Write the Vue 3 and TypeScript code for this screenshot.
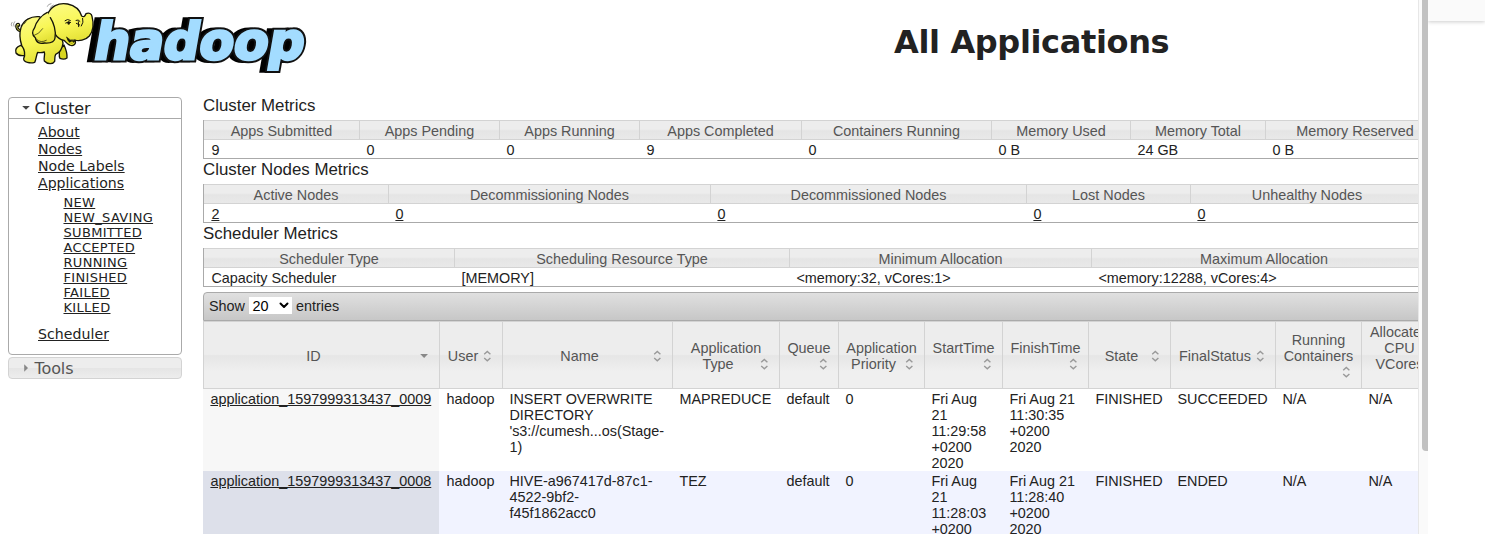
<script setup lang="ts">
interface Metric {
  label: string
  value: string
  link?: boolean
}
interface MetricTable {
  title: string
  kind: string
  cells: Metric[]
}

const metricTables: MetricTable[] = [
  {
    title: 'Cluster Metrics',
    kind: 'cols-cluster',
    cells: [
      { label: 'Apps Submitted', value: '9' },
      { label: 'Apps Pending', value: '0' },
      { label: 'Apps Running', value: '0' },
      { label: 'Apps Completed', value: '9' },
      { label: 'Containers Running', value: '0' },
      { label: 'Memory Used', value: '0 B' },
      { label: 'Memory Total', value: '24 GB' },
      { label: 'Memory Reserved', value: '0 B' },
    ],
  },
  {
    title: 'Cluster Nodes Metrics',
    kind: 'cols-nodes',
    cells: [
      { label: 'Active Nodes', value: '2', link: true },
      { label: 'Decommissioning Nodes', value: '0', link: true },
      { label: 'Decommissioned Nodes', value: '0', link: true },
      { label: 'Lost Nodes', value: '0', link: true },
      { label: 'Unhealthy Nodes', value: '0', link: true },
    ],
  },
  {
    title: 'Scheduler Metrics',
    kind: 'cols-scheduler',
    cells: [
      { label: 'Scheduler Type', value: 'Capacity Scheduler' },
      { label: 'Scheduling Resource Type', value: '[MEMORY]' },
      { label: 'Minimum Allocation', value: '<memory:32, vCores:1>' },
      { label: 'Maximum Allocation', value: '<memory:12288, vCores:4>' },
    ],
  },
]

const mainLinks: string[] = ['About', 'Nodes', 'Node Labels', 'Applications']
const stateLinks: string[] = ['NEW', 'NEW_SAVING', 'SUBMITTED', 'ACCEPTED', 'RUNNING', 'FINISHED', 'FAILED', 'KILLED']

const headers: string[] = [
  'ID', 'User', 'Name', 'Application\nType', 'Queue', 'Application\nPriority', 'StartTime',
  'FinishTime', 'State', 'FinalStatus', 'Running\nContainers', 'Allocated\nCPU\nVCores',
]

const rows: string[][] = [
  ['application_1597999313437_0009', 'hadoop', "INSERT OVERWRITE\nDIRECTORY\n's3://cumesh...os(Stage-\n1)", 'MAPREDUCE', 'default', '0',
    'Fri Aug\n21\n11:29:58\n+0200\n2020', 'Fri Aug 21\n11:30:35\n+0200\n2020', 'FINISHED', 'SUCCEEDED', 'N/A', 'N/A'],
  ['application_1597999313437_0008', 'hadoop', 'HIVE-a967417d-87c1-\n4522-9bf2-\nf45f1862acc0', 'TEZ', 'default', '0',
    'Fri Aug\n21\n11:28:03\n+0200\n2020', 'Fri Aug 21\n11:28:40\n+0200\n2020', 'FINISHED', 'ENDED', 'N/A', 'N/A'],
]
</script>

<template>
  <div class="screen">
    <div class="page">
      <header class="top">
        <svg class="logo" viewBox="0 0 960 240" width="320" height="80">
          <defs>
            <linearGradient id="skin" x1="0" y1="0" x2="0.3" y2="1">
              <stop offset="0" stop-color="#fcfb86" />
              <stop offset="0.6" stop-color="#f8f655" />
              <stop offset="1" stop-color="#e4e136" />
            </linearGradient>
          </defs>
          <g class="word" font-family="DejaVu Sans, sans-serif" font-weight="bold" font-size="152" transform="translate(0 176) skewX(-10)">
            <text class="shade" x="259" y="0" textLength="630" lengthAdjust="spacingAndGlyphs">hadoop</text>
            <text class="edge" x="276" y="0" textLength="630" lengthAdjust="spacingAndGlyphs" aria-hidden="true">hadoop</text>
            <text class="face" x="276" y="0" textLength="630" lengthAdjust="spacingAndGlyphs" aria-hidden="true">hadoop</text>
          </g>
          <g class="elephant" fill="url(#skin)" stroke="#15150a" stroke-width="4" stroke-linejoin="round" stroke-linecap="round">
            <path d="M62 95 C52 94 45 84 48 75 C51 68 59 69 59 76 C58 80 54 79 54 77 C52 86 58 90 64 88Z" />
            <path d="M178 148 C180 158 175 168 180 175 Q192 180 201 174 C202 160 198 148 192 135Z" fill="#d8d520" />
            <path d="M62 136 C50 140 45 149 48 159 C54 167 64 168 75 166 L82 145Z" />
            <path d="M117 50 C92 48 70 61 63 83 C57 103 60 121 65 136 C74 149 78 160 71 176 C70 187 91 191 104 187 C109 178 108 167 113 157 Q124 159 133 156 C136 164 130 176 133 183 C143 194 159 193 164 184 C165 177 163 170 167 163 C181 157 187 145 189 130 L180 80Z" />
            <path d="M141 47 C151 18 176 7 203 12 C226 17 240 31 245 48 C253 54 256 45 258 41 C267 37 275 41 276 49 C282 72 279 94 268 108 C257 121 235 124 225 120 C230 133 219 140 209 135 C202 133 198 126 192 121 C181 119 170 110 164 100Z" />
            <path d="M142 37 C124 45 108 66 104 83 C96 94 95 105 106 113 C109 129 119 132 134 129 C151 130 164 125 165 114 C169 94 161 68 151 53" />
            <path d="M200 112 Q210 124 225 120 Q226 127 214 130 Q203 126 200 112" fill="#171709" stroke-width="2" />
            <path d="M210 127 Q215 123 221 126 Q218 132 212 131Z" fill="#d8d520" stroke="none" />
            <path d="M195 62 Q202 55 211 61 M197 69 Q205 64 212 67 M228 61 Q235 57 240 64 M229 70 L239 75 M235 65 L236 80 M248 55 Q252 67 244 78" fill="none" stroke-width="3" />
            <ellipse cx="206" cy="69" rx="4" ry="5" fill="#15150a" stroke="none" />
            <path d="M101 107 Q117 103 128 86 M111 119 Q122 130 139 121 M78 65 L72 72" fill="none" stroke-width="2" />
            <path d="M35 78 Q31 72 36 67 M42 79 Q37 72 44 65 M142 19 Q144 12 153 11 M150 26 Q151 18 160 15" fill="none" stroke="#777" stroke-width="2" />
          </g>
        </svg>
        <h1>All Applications</h1>
      </header>

      <div class="layout">
        <nav class="side">
          <section class="panel">
            <div class="panel-head open">
              <svg width="16" height="16" viewBox="0 0 16 16"><path d="M4.2 6H11.8L8 9.8Z" fill="#454545" /></svg>
              <span>Cluster</span>
            </div>
            <ul class="links">
              <li v-for="l in mainLinks" :key="l"><a>{{ l }}</a></li>
            </ul>
            <ul class="states">
              <li v-for="s in stateLinks" :key="s"><a>{{ s }}</a></li>
            </ul>
            <ul class="links last">
              <li><a>Scheduler</a></li>
            </ul>
          </section>
          <section class="panel-head closed">
            <svg width="16" height="16" viewBox="0 0 16 16"><path d="M6.2 4.2V11.8L10 8Z" fill="#888" /></svg>
            <span>Tools</span>
          </section>
        </nav>

        <main class="content">
          <section v-for="t in metricTables" :key="t.title" class="metrics">
            <h3>{{ t.title }}</h3>
            <div class="grid" :class="t.kind">
              <div v-for="c in t.cells" :key="c.label" class="mhead">{{ c.label }}</div>
              <div v-for="c in t.cells" :key="c.label + 'v'" class="mcell">
                <a v-if="c.link">{{ c.value }}</a>
                <template v-else>{{ c.value }}</template>
              </div>
            </div>
          </section>

          <section class="apps">
            <div class="toolbar">
              <span>Show</span>
              <span class="select">20
                <svg width="10" height="7" viewBox="0 0 10 7"><path d="M1.5 1.5L5 5L8.5 1.5" fill="none" stroke="#000" stroke-width="2" stroke-linecap="round" stroke-linejoin="round" /></svg>
              </span>
              <span>entries</span>
            </div>
            <div class="grid cols-apps">
              <div v-for="(h, i) in headers" :key="h" class="ahead">
                <div class="wrap"><span class="label">{{ h }}</span><svg class="sort" width="16" height="16" viewBox="0 0 16 16">
                  <path v-if="i === 0" d="M4.2 6H12L8.1 9.9Z" fill="#888" />
                  <path v-else d="M5.2 6.3L8.3 3.5L11.4 6.3M5.2 9.9L8.3 12.7L11.4 9.9" fill="none" stroke="#999" stroke-width="1.4" />
                </svg></div>
              </div>
            </div>
            <div v-for="(r, ri) in rows" :key="ri" class="grid cols-apps row" :class="{ even: ri % 2 === 1 }">
              <div v-for="(c, ci) in r" :key="ci" class="acell">
                <a v-if="ci === 0">{{ c }}</a>
                <template v-else>{{ c }}</template>
              </div>
            </div>
          </section>
        </main>
      </div>
    </div>
    <div class="track"><div class="thumb"></div></div>
    <aside class="outer"><div class="bar"></div></aside>
  </div>
</template>

<style>
html,
body {
  margin: 0;
  overflow: hidden;
  background: #fff;
}
</style>

<style scoped>
* {
  box-sizing: border-box;
}
.screen {
  display: flex;
  width: 1485px;
  height: 534px;
  overflow: hidden;
  color: #222;
  font-family: "Liberation Sans", Arial, sans-serif;
  font-size: 14.4px;
  line-height: 16px;
}
.page {
  width: 1418px;
  flex: none;
  overflow: hidden;
}
.top {
  display: flex;
  height: 97px;
}
.logo {
  flex: none;
  overflow: visible;
}
.shade {
  fill: #000;
  stroke: #000;
  stroke-width: 19;
}
.edge {
  fill: #111;
  stroke: #111;
  stroke-width: 21;
}
.face {
  fill: #a3dcff;
  stroke: #a3dcff;
  stroke-width: 9;
}
h1 {
  margin: 22px 0 0 574px;
  font: bold 32px/40px "DejaVu Sans", sans-serif;
  letter-spacing: -0.36px;
  white-space: nowrap;
}
.layout {
  display: flex;
  gap: 21px;
  padding-left: 8px;
}
.side {
  width: 174px;
  flex: none;
  font-family: "DejaVu Sans", sans-serif;
}
.panel {
  height: 258px;
  border: 1px solid #aaa;
  border-radius: 4px;
}
.panel-head {
  display: flex;
  align-items: center;
  height: 21px;
  padding-left: 9px;
  font-size: 16px;
  line-height: 18px;
}
.panel-head svg {
  margin-left: -0.5px;
}
.panel-head span {
  margin-left: 1px;
  padding-top: 2px;
  letter-spacing: -0.1px;
}
.open {
  border-bottom: 1px solid #aaa;
}
.closed {
  height: 22px;
  margin-top: 2px;
  border: 1px solid #d3d3d3;
  border-radius: 4px;
  background: linear-gradient(#ededed 0 48%, #e5e5e5 52%, #ededed);
  color: #555;
}
ul {
  margin: 0;
  padding: 0;
  list-style: none;
}
a {
  text-decoration: underline;
}
.links {
  margin: 5px 0 0 29px;
  font-size: 14.1px;
  line-height: 17px;
}
.states {
  margin: 3px 0 0 54.5px;
  font-size: 13px;
  letter-spacing: 0.32px;
  line-height: 15px;
}
.last {
  margin-top: 11px;
  letter-spacing: 0.05px;
}
.content {
  width: 1189px;
  flex: none;
}
.metrics {
  height: 64px;
}
h3 {
  height: 23px;
  margin: 0;
  font-size: 16.85px;
  font-weight: 400;
  line-height: 18px;
}
.grid {
  display: grid;
  width: max-content;
  white-space: pre;
}
.metrics .grid {
  border-left: 1px solid #aaa;
  border-bottom: 1px solid #aaa;
}
.cols-cluster {
  grid-template-columns: 155px 140px 140px 162px 190px 139px 135px 179px;
}
.cols-nodes {
  grid-template-columns: 184px 322px 316px 164px 233px;
}
.cols-scheduler {
  grid-template-columns: 250px 335px 302px 345px;
}
.cols-apps {
  grid-template-columns: 236px 63px 170px 107px 59px 86px 78px 86px 82px 105px 86px 76px;
}
.mhead {
  height: 20px;
  padding-top: 2px;
  border: solid #d3d3d3;
  border-width: 1px 0 1px 1px;
  background: linear-gradient(#ededed 0 45%, #e5e5e5 55%, #e9e9e9);
  color: #555;
  text-align: center;
}
.mhead:first-child {
  border-left: 0;
}
.mcell {
  height: 18px;
  padding: 2px 0 0 7.4px;
  line-height: 16px;
}
.toolbar {
  display: flex;
  align-items: center;
  gap: 4.5px;
  width: 1235px;
  height: 29px;
  margin-top: 3px;
  padding: 0 0 2px 5px;
  border: 1px solid #aaa;
  border-radius: 4px 0 0 0;
  background: linear-gradient(#e0e0e0, #c7c7c7);
}
.select {
  display: flex;
  align-items: center;
  justify-content: space-between;
  width: 43px;
  height: 17px;
  margin-left: -1px;
  padding: 0 3px 0 4px;
  background: #fff;
  color: #000;
}
.ahead {
  display: flex;
  align-items: center;
  height: 68px;
  padding: 2px 7px 0;
  border: solid #d3d3d3;
  border-width: 1px 0 1px 1px;
  background: linear-gradient(#ededed 0 49%, #e6e6e6 51%, #efefef 75%, #efefef);
  color: #555;
  text-align: center;
}
.wrap {
  display: flow-root;
  width: 100%;
  white-space: pre-line;
}
.sort {
  float: right;
}
.acell {
  height: 82px;
  padding: 2px 0 0 7.4px;
}
.acell:first-child {
  background: #f7f7f7;
}
.even {
  background: #f1f3ff;
}
.even .acell:first-child {
  background: #dde0ea;
}
.track {
  width: 10px;
  flex: none;
  padding-left: 3px;
  border-left: 1px solid #e7e7e7;
  background: #fafafa;
}
.thumb {
  height: 451px;
  border-radius: 0 0 0 4px;
  background: #c1c1c1;
}
.outer {
  flex: 1;
  overflow: hidden;
}
.bar {
  height: 21px;
  background: #fafafa;
  box-shadow: 0 1px 4px rgba(0, 0, 0, 0.2);
}
</style>
